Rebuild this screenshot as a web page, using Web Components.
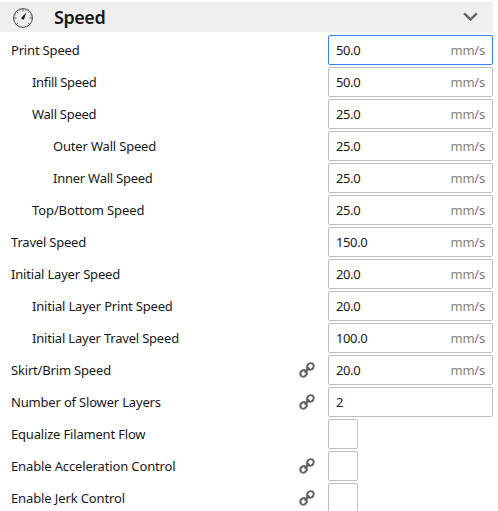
<!DOCTYPE html>
<html lang="en">
<head>
<meta charset="utf-8">
<title>Speed settings</title>
<style>
  html, body { margin: 0; background: #fff; }
  body { height: 511px; overflow: hidden; font: 13px "Noto Sans", sans-serif; color: #191919; }
</style>
</head>
<body>
<settings-panel>
  <category-header slot="header">Speed</category-header>
  <setting-row value="50.0" unit="mm/s" focused>Print Speed</setting-row>
  <setting-row level="1" value="50.0" unit="mm/s" tracking="-.31">Infill Speed</setting-row>
  <setting-row level="1" value="25.0" unit="mm/s" tracking="-.27">Wall Speed</setting-row>
  <setting-row level="2" value="25.0" unit="mm/s">Outer Wall Speed</setting-row>
  <setting-row level="2" value="25.0" unit="mm/s" tracking="-.25">Inner Wall Speed</setting-row>
  <setting-row level="1" value="25.0" unit="mm/s" tracking="-.1">Top/Bottom Speed</setting-row>
  <setting-row value="150.0" unit="mm/s" tracking="-.2">Travel Speed</setting-row>
  <setting-row value="20.0" unit="mm/s">Initial Layer Speed</setting-row>
  <setting-row level="1" value="20.0" unit="mm/s">Initial Layer Print Speed</setting-row>
  <setting-row level="1" value="100.0" unit="mm/s" tracking="-.2">Initial Layer Travel Speed</setting-row>
  <setting-row value="20.0" unit="mm/s" linked>Skirt/Brim Speed</setting-row>
  <setting-row value="2" linked>Number of Slower Layers</setting-row>
  <setting-row check>Equalize Filament Flow</setting-row>
  <setting-row check linked tracking="-.14">Enable Acceleration Control</setting-row>
  <setting-row check linked tracking="-.12">Enable Jerk Control</setting-row>
</settings-panel>
<script>
class SettingsPanel extends HTMLElement {
  constructor() {
    super();
    this.attachShadow({ mode: 'open' }).innerHTML = `
      <style>
        :host { display: block; width: 493px; padding-top: 2px; }
        .rows { display: flex; flex-direction: column; gap: 2px; padding-top: 3px; }
      </style>
      <slot name="header"></slot>
      <div class="rows"><slot></slot></div>`;
  }
}
class CategoryHeader extends HTMLElement {
  constructor() {
    super();
    this.attachShadow({ mode: 'open' }).innerHTML = `
      <style>
        :host { display: flex; align-items: center; height: 30px; box-sizing: border-box;
                padding: 0 15px 0 13px; background: #efefef; }
        .title { flex: 1; margin-left: 21px; font-size: 18px; font-weight: 600; line-height: 30px; letter-spacing: -.45px; }
        svg { display: block; }
        .gauge { position: relative; top: 1px; }
      </style>
      <svg class="gauge" width="20" height="20" viewBox="0 0 20 20" fill="none" stroke="#444">
        <circle cx="10" cy="10" r="9.4" stroke-width="1"/>
        <path d="M10 1v2.6M1 10h2.6M16.4 10h2.6M3.6 3.6l1.6 1.6M3.6 16.4l1.4-1.4M16.4 16.4l-1.4-1.4M16.4 3.6l-1.2 1.2" stroke-width=".8"/>
        <path d="M6.5 1.7l.6 1.5M13.5 1.7l-.6 1.5M1.7 6.5l1.5 .6M18.3 6.5l-1.5 .6" stroke-width=".6"/>
        <path d="M13.6 4.2L11.2 10.8A1.45 1.45 0 1 1 8.8 9.2Z" fill="#222" stroke="none"/>
      </svg>
      <span class="title"><slot></slot></span>
      <svg width="15" height="10" viewBox="0 0 15 10" fill="none" stroke="#666" stroke-width="2.5">
        <path d="M1.2 1.4L7.5 7.6L13.8 1.4"/>
      </svg>`;
  }
}
class LinkIcon extends HTMLElement {
  constructor() {
    super();
    this.attachShadow({ mode: 'open' }).innerHTML = `
      <style>:host { display: block; width: 16px; height: 16px; } svg { display: block; }</style>
      <svg width="16" height="16" viewBox="0 0 16 16" fill="none" stroke="#666" stroke-width="2.1">
        <ellipse cx="11.4" cy="4.5" rx="3.5" ry="3.1" transform="rotate(-45 11.4 4.5)"/>
        <ellipse cx="4.6" cy="11.4" rx="3.5" ry="3.1" transform="rotate(-45 4.6 11.4)"/>
        <path d="M5.6 10.4L10.4 5.6" stroke-width="2.3"/>
      </svg>`;
  }
}
class SettingRow extends HTMLElement {
  constructor() {
    super();
    this.attachShadow({ mode: 'open' });
  }
  connectedCallback() {
    const level = Number(this.getAttribute('level') || 0);
    const unit = this.getAttribute('unit') || '';
    const tracking = this.getAttribute('tracking') || '-.18';
    this.shadowRoot.innerHTML = `
      <style>
        :host { display: flex; align-items: center; height: 30px; line-height: 30px; }
        .label { flex: 1; padding-left: ${11 + level * 21}px; white-space: nowrap; letter-spacing: ${tracking}px; }
        link-icon { margin-right: 13px; }
        .field { box-sizing: border-box; width: 165px; height: 30px; line-height: 28px; padding: 0 7px;
                 display: flex; justify-content: space-between;
                 border: 1px solid #bebebe; border-radius: 2px; background: #fff; }
        :host([check]) .field { width: 30px; margin-right: 135px; }
        :host([focused]) .field { border-color: #3282ff; }
        .value { letter-spacing: -.38px; }
        .unit { color: #808080; letter-spacing: -.2px; }
      </style>
      <span class="label"><slot></slot></span>
      ${this.hasAttribute('linked') ? '<link-icon></link-icon>' : ''}
      <div class="field"><span class="value">${this.getAttribute('value') || ''}</span><span class="unit">${unit}</span></div>`;
  }
}
customElements.define('settings-panel', SettingsPanel);
customElements.define('category-header', CategoryHeader);
customElements.define('link-icon', LinkIcon);
customElements.define('setting-row', SettingRow);
</script>
</body>
</html>
